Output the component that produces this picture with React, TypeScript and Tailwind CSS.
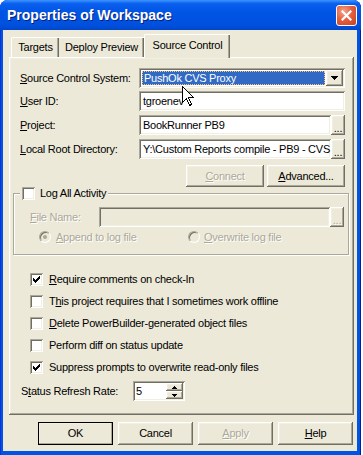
import React from "react";

const raised =
  "shadow-[inset_-1px_-1px_#716F64,inset_1px_1px_#FFFFFF,inset_-2px_-2px_#ACA899,inset_2px_2px_#F1EFE2]";
const sunken =
  "shadow-[inset_1px_1px_#ACA899,inset_-1px_-1px_#FFFFFF,inset_2px_2px_#716F64,inset_-2px_-2px_#F1EFE2]";
const grayText = "text-[#ACA899] [text-shadow:1px_1px_0_#FFFFFF]";

const Check = () => (
  <svg width="7" height="7" viewBox="0 0 7 7" shapeRendering="crispEdges">
    <path
      d="M0 2h1v3H0zM1 3h1v3H1zM2 4h1v3H2zM3 3h1v3H3zM4 2h1v3H4zM5 1h1v3H5zM6 0h1v3H6z"
      fill="#000"
    />
  </svg>
);

const CheckBox = ({ checked }: { checked?: boolean }) => (
  <div className={`w-[13px] h-[13px] shrink-0 bg-white flex items-center justify-center ${sunken}`}>
    {checked && <Check />}
  </div>
);

const Radio = ({ checked }: { checked?: boolean }) => (
  <div className="w-[12px] h-[12px] shrink-0 rounded-full border border-t-[#ACA899] border-l-[#ACA899] border-r-white border-b-white bg-[#ECE9D8] shadow-[inset_1px_1px_#716F64] flex items-center justify-center">
    {checked && <div className="w-[4px] h-[4px] rounded-full bg-[#ACA899]" />}
  </div>
);

const Btn = ({
  children,
  disabled,
  isDefault,
  className = "",
}: {
  children: React.ReactNode;
  disabled?: boolean;
  isDefault?: boolean;
  className?: string;
}) => (
  <div
    className={`flex items-center justify-center bg-[#ECE9D8] ${raised} ${
      isDefault ? "outline outline-1 outline-black -outline-offset-1" : ""
    } ${disabled ? grayText : "text-black"} ${className}`}
  >
    {children}
  </div>
);

const Dots = ({ disabled }: { disabled?: boolean }) => (
  <div
    className={`w-[14px] h-[20px] shrink-0 flex items-end justify-center pb-[3px] bg-[#ECE9D8] ${raised} ${
      disabled ? grayText : ""
    }`}
  >
    <span className="leading-[8px]">...</span>
  </div>
);

const Field = ({ value, className = "" }: { value: string; className?: string }) => (
  <div
    className={`h-[20px] bg-white flex items-center pl-[4px] overflow-hidden whitespace-nowrap ${sunken} ${className}`}
  >
    {value}
  </div>
);

const Row = ({ label, children }: { label: React.ReactNode; children: React.ReactNode }) => (
  <div className="flex items-center h-[20px]">
    <div className="w-[130px] pl-[11px] whitespace-nowrap">{label}</div>
    {children}
  </div>
);

const CheckRow = ({ checked, children }: { checked?: boolean; children: React.ReactNode }) => (
  <div className="flex items-center h-[14px] pl-[21px] gap-[6px]">
    <CheckBox checked={checked} />
    <span className="whitespace-nowrap">{children}</span>
  </div>
);

const Cursor = () => (
  <svg
    className="absolute left-[182px] top-[86px]"
    width="13"
    height="21"
    viewBox="0 0 13 21"
    shapeRendering="crispEdges"
  >
    <path
      d="M0.5 0.5 L0.5 16.5 L4.5 12.5 L7.5 19.5 L9.5 18.5 L6.5 11.5 L11.5 11.5 Z"
      fill="#fff"
      stroke="#000"
      strokeWidth="1"
    />
  </svg>
);

export default function App() {
  return (
    <div className="relative w-[363px] h-[455px] bg-white font-['Liberation_Sans',Arial,sans-serif] text-[11px] leading-[13px] text-black tracking-[-0.25px]">
      <div className="w-[361px] h-[455px] flex flex-col rounded-t-[8px] bg-[#0054E3] shadow-[inset_1px_0_#0831D9,inset_-1px_0_#001EA0]">
        {/* title bar */}
        <div className="h-[30px] shrink-0 flex items-center pl-[7px] pr-[4px] rounded-t-[8px] bg-[linear-gradient(to_bottom,#3D95FF_0%,#0A5FEE_12%,#0055E5_40%,#0050DD_85%,#0046C8_100%)]">
          <span className="font-bold text-[14px] tracking-normal text-white [text-shadow:1px_1px_0_#0A1E7A]">
            Properties of Workspace
          </span>
          <div className="ml-auto w-[21px] h-[21px] rounded-[3px] border border-white bg-[radial-gradient(circle_at_35%_30%,#F4A78F_0%,#E5603F_45%,#C4401F_100%)] flex items-center justify-center">
            <svg width="11" height="11" viewBox="0 0 11 11">
              <path d="M1.5 1.5 L9.5 9.5 M9.5 1.5 L1.5 9.5" stroke="#fff" strokeWidth="2.2" strokeLinecap="square" />
            </svg>
          </div>
        </div>

        {/* client */}
        <div className="flex-1 ml-[3px] mr-[4px] mb-[4px] bg-[#ECE9D8] flex flex-col pl-[6px]">
          {/* tabs */}
          <div className="relative z-10 flex items-end h-[23px] mt-[4px] pl-[2px]">
            <div className="w-[48px] h-[20px] flex items-center justify-center border-t border-l border-white shadow-[inset_-1px_0_#716F64,inset_-2px_0_#ACA899] rounded-tl-[2px]">
              Targets
            </div>
            <div className="w-[85px] h-[20px] flex items-center justify-center border-t border-white shadow-[inset_-1px_0_#716F64,inset_-2px_0_#ACA899]">
              Deploy Preview
            </div>
            <div className="w-[86px] h-[24px] -mb-[1px] pb-[3px] flex items-center justify-center bg-[#ECE9D8] border-t border-l border-white shadow-[inset_-1px_0_#716F64,inset_-2px_0_#ACA899] rounded-tl-[2px]">
              Source Control
            </div>
          </div>

          {/* panel */}
          <div className={`w-[345px] h-[358px] shrink-0 flex flex-col ${raised}`}>
            <div className="mt-[11px]">
              <Row
                label={
                  <>
                    <u>S</u>ource Control System:
                  </>
                }
              >
                <div className={`w-[206px] h-[20px] bg-white flex items-center p-[2px] ${sunken}`}>
                  <div className="flex-1 h-[16px] p-[1px]">
                    <div className="h-full bg-[#316AC5] text-white border border-dotted border-[#F7C86A] flex items-center pl-[1px]">
                      PushOk CVS Proxy
                    </div>
                  </div>
                  <div className={`w-[17px] h-[16px] bg-[#ECE9D8] flex items-center justify-center ${raised}`}>
                    <svg width="7" height="4" viewBox="0 0 7 4" shapeRendering="crispEdges">
                      <path d="M0 0h7v1H0zM1 1h5v1H1zM2 2h3v1H2zM3 3h1v1H3z" fill="#000" />
                    </svg>
                  </div>
                </div>
              </Row>
            </div>
            <div className="mt-[3px]">
              <Row
                label={
                  <>
                    <u>U</u>ser ID:
                  </>
                }
              >
                <Field value="tgroenev" className="w-[206px]" />
              </Row>
            </div>
            <div className="mt-[4px]">
              <Row
                label={
                  <>
                    <u>P</u>roject:
                  </>
                }
              >
                <Field value="BookRunner PB9" className="w-[192px]" />
                <Dots />
              </Row>
            </div>
            <div className="mt-[4px]">
              <Row
                label={
                  <>
                    <u>L</u>ocal Root Directory:
                  </>
                }
              >
                <Field value="Y:\Custom Reports compile - PB9 - CVS" className="w-[192px] pl-[2px] pr-[2px]" />
                <Dots />
              </Row>
            </div>

            <div className="flex mt-[6px] ml-[177px] gap-[3px]">
              <Btn disabled className="w-[78px] h-[22px]">
                <u>C</u>onnect
              </Btn>
              <Btn className="w-[78px] h-[22px]">
                <u>A</u>dvanced...
              </Btn>
            </div>

            {/* Log group */}
            <div className="mt-[6px] ml-[4px] w-[336px] h-[62px] border border-[#ACA899] shadow-[inset_1px_1px_#FFFFFF,1px_1px_#FFFFFF] flex flex-col">
              <div className="-mt-[7px] ml-[6px] w-fit px-[2px] bg-[#ECE9D8] flex items-center gap-[5px] h-[13px]">
                <CheckBox />
                <span>Log All Activity</span>
              </div>
              <div className="flex items-center h-[20px] mt-[7px]">
                <div className={`w-[85px] pl-[16px] ${grayText}`}>
                  <u>F</u>ile Name:
                </div>
                <div className={`w-[231px] h-[20px] bg-[#ECE9D8] ${sunken}`} />
                <Dots disabled />
              </div>
              <div className="flex items-center h-[12px] mt-[4px] pl-[25px]">
                <Radio checked />
                <span className={`ml-[5px] w-[132px] ${grayText}`}>
                  <u>A</u>ppend to log file
                </span>
                <Radio />
                <span className={`ml-[4px] ${grayText}`}>
                  <u>O</u>verwrite log file
                </span>
              </div>
            </div>

            <div className="flex flex-col gap-[8px] mt-[17px]">
              <CheckRow checked>
                <u>R</u>equire comments on check-In
              </CheckRow>
              <CheckRow>
                T<u>h</u>is project requires that I sometimes work offline
              </CheckRow>
              <CheckRow>
                <u>D</u>elete PowerBuilder-generated object files
              </CheckRow>
              <CheckRow>Perform diff on status update</CheckRow>
              <CheckRow checked>Suppress prompts to overwrite read-only files</CheckRow>
            </div>

            <div className="flex items-center h-[20px] mt-[7px]">
              <div className="w-[124px] pl-[12px] whitespace-nowrap">
                S<u>t</u>atus Refresh Rate:
              </div>
              <div className={`w-[52px] h-[20px] bg-white flex items-center p-[2px] ${sunken}`}>
                <span className="flex-1 pl-[1px]">5</span>
                <div className="w-[17px] h-[16px] flex flex-col">
                  <div className={`h-[8px] bg-[#ECE9D8] flex items-center justify-center ${raised}`}>
                    <svg width="5" height="3" viewBox="0 0 5 3" shapeRendering="crispEdges">
                      <path d="M2 0h1v1H2zM1 1h3v1H1zM0 2h5v1H0z" fill="#000" />
                    </svg>
                  </div>
                  <div className={`h-[8px] bg-[#ECE9D8] flex items-center justify-center ${raised}`}>
                    <svg width="5" height="3" viewBox="0 0 5 3" shapeRendering="crispEdges">
                      <path d="M0 0h5v1H0zM1 1h3v1H1zM2 2h1v1H2z" fill="#000" />
                    </svg>
                  </div>
                </div>
              </div>
            </div>
          </div>

          {/* dialog buttons */}
          <div className="flex gap-[5px] mt-[7px] ml-[29px]">
            <Btn isDefault className="w-[75px] h-[23px]">
              OK
            </Btn>
            <Btn className="w-[75px] h-[23px]">Cancel</Btn>
            <Btn disabled className="w-[75px] h-[23px]">
              <u>A</u>pply
            </Btn>
            <Btn className="w-[75px] h-[23px]">
              <u>H</u>elp
            </Btn>
          </div>
        </div>
      </div>
      <Cursor />
    </div>
  );
}
